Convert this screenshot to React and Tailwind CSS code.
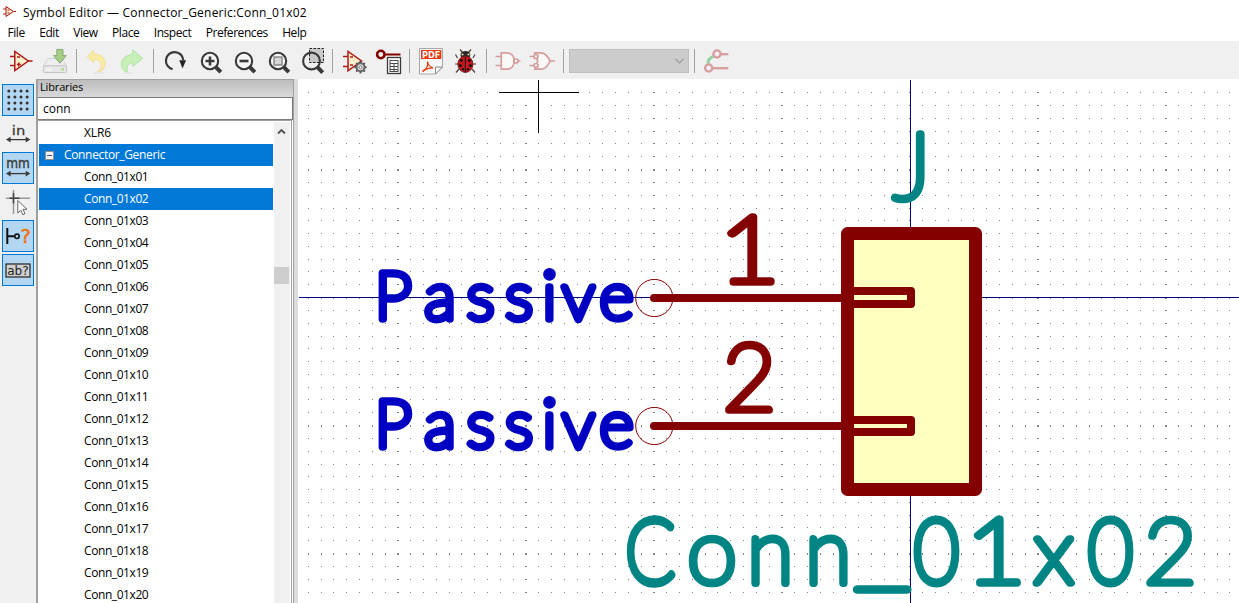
import React from "react";

const OUT = "#b01a1a";
const INK = "#3a3a3a";

/* A 34px toolbar slot; x and y give the slot's origin in window units. */
function Icon({ x, y = 44, children }) {
  return (
    <svg width="34" height="34" viewBox={`${x} ${y} 34 34`} className="block shrink-0" fill="none">
      {children}
    </svg>
  );
}

function Separator() {
  return (
    <div className="flex h-[34px] w-[9px] shrink-0 justify-center py-[5px]">
      <div className="w-px bg-[#a0a0a0]" />
    </div>
  );
}

function Magnifier({ cx, children }) {
  return (
    <g stroke={INK}>
      <circle cx={cx} cy="61" r="8.2" strokeWidth="2.1" fill="#f6f6f6" />
      <path d={`M${cx + 5.6} 66.8 l5.2 5.4`} strokeWidth="4" />
      {children}
    </g>
  );
}

const spokes = [0, 45, 90, 135, 180, 225, 270, 315];

function Toolbar() {
  return (
    <div className="flex h-[38px] shrink-0 items-start bg-[#f0f0f0] pl-1 pt-[3px]">
      <Icon x={4}>
        <g stroke={OUT} strokeWidth="1.5">
          <path d="M14.8 51.4V70.6L28.3 61Z" fill="#fbefcb" />
          <path d="M10 56.5h5M10 65.5h5M28 61h4.6M17 57h3M16.8 64.5h4M18.8 62.5v4" />
        </g>
      </Icon>
      <Icon x={38}>
        <path d="M47.5 58.5h15l4 7.5h-23z" fill="#eeeeee" stroke="#d4d4d4" />
        <rect x="43.4" y="65.8" width="23.2" height="6.8" rx="1.2" fill="#e6e6e6" stroke="#c4c4c4" />
        <path d="M46 69.5h6" stroke="#f8f8f8" strokeWidth="2" />
        <rect x="61.5" y="68" width="2.5" height="2.5" fill="#a9dd86" />
        <path d="M56.8 49.4h6.2v6.2h3.3L59.9 63.2 53.5 55.6h3.3z" fill="#a6cf86" stroke="#8ba57c" />
      </Icon>
      <Separator />
      <Icon x={81}>
        <path d="M87.3 56.5L93.8 50.2V54C101 54 105.2 58 105.2 63.5C105.2 69 101.5 71.5 96.6 72.5C101 69.5 101.7 67 101 64.2C100 60.6 97.6 59.6 93.8 59.5V62.8Z" fill="#faeba2" stroke="#f0dd98" />
        <path d="M94 73h10" stroke="#e6e6e6" strokeWidth="1.5" />
      </Icon>
      <Icon x={115}>
        <path d="M142.7 58.4L132.8 50V54.6C125.5 55 121.5 59 121.5 64.5C121.5 68.5 123.5 71 127.5 72.5C125.8 67.5 127.5 63.2 132.8 62.4V66.2Z" fill="#c6f0b8" stroke="#aee3a2" />
        <path d="M124 73h9" stroke="#e6e6e6" strokeWidth="1.5" />
      </Icon>
      <Separator />
      <Icon x={158}>
        <path d="M172.6 69.2A8.7 8.7 0 1 1 183.3 60" stroke={INK} strokeWidth="2.2" />
        <path d="M179.3 60.2h6.8l-3.6 8.4z" fill="#222" />
      </Icon>
      <Icon x={192}>
        <Magnifier cx={210}>
          <path d="M205.5 61h9M210 56.5v9" strokeWidth="2.6" />
        </Magnifier>
      </Icon>
      <Icon x={226}>
        <Magnifier cx={244}>
          <path d="M239.5 61h9" strokeWidth="2.6" />
        </Magnifier>
      </Icon>
      <Icon x={260}>
        <Magnifier cx={278}>
          <rect x="274" y="57" width="8" height="8" fill="#d6d6d6" stroke="#858585" strokeWidth="1.4" />
        </Magnifier>
      </Icon>
      <Icon x={294}>
        <rect x="309.5" y="48.5" width="14" height="14" fill="#c9c9c9" />
        <g stroke={INK}>
          <circle cx="311.5" cy="61" r="8.4" strokeWidth="2.1" />
          <path d="M317.3 67l5.4 5.6" strokeWidth="4" />
        </g>
        <rect x="309.5" y="48.5" width="14" height="14" stroke="#222" strokeDasharray="2.6 1.4" />
      </Icon>
      <Separator />
      <Icon x={337}>
        <g stroke={OUT} strokeWidth="1.5">
          <path d="M348 51.4V70.8L361.6 61Z" fill="#fbefcb" />
          <path d="M343 56.5h5M343 66.5h5M350 57h3M350 65h3" />
        </g>
        <circle cx="360.5" cy="67.3" r="4" fill="#f0f0f0" stroke="#666" strokeWidth="2" />
        {spokes.map((a) => (
          <path key={a} d="M360.5 62.8v-1.6" stroke="#555" strokeWidth="2" transform={`rotate(${a} 360.5 67.3)`} />
        ))}
        <circle cx="360.5" cy="67.3" r="1.6" fill="#fff" stroke="#666" />
      </Icon>
      <Icon x={371}>
        <circle cx="380.8" cy="54.5" r="3.7" stroke="#840000" strokeWidth="2.6" />
        <path d="M384.5 54.5H400.5" stroke="#840000" strokeWidth="2" />
        <rect x="387.5" y="57.5" width="13" height="16" fill="#fff" stroke={INK} strokeWidth="1.3" />
        <path d="M390 60.5h8M390 63.5h8M390 66.5h8M390 69.5h8M390 71.5h8M390 60v12M394 63v9M398 60v12" stroke="#4a4a4a" />
      </Icon>
      <Separator />
      <Icon x={414}>
        <path d="M419.5 48.5h23v18.5l-7 7h-16z" fill="#f8f8f8" stroke="#a8a8a8" />
        <path d="M435.5 74v-7h7z" fill="#fff" stroke="#888" />
        <rect x="421" y="50" width="20.3" height="9" fill="#e8380d" />
        <text x="422" y="57.8" textLength="18.4" lengthAdjust="spacingAndGlyphs" fill="#fff" className="font-['DejaVu_Sans'] text-[8.5px] font-bold">PDF</text>
        <path d="M427.5 61.5C428.5 66 426 70 423 71.5C422 70.5 427 68 433 67.8C430.5 67 428 64.5 427.5 61.5" stroke="#e8380d" strokeWidth="1.2" />
      </Icon>
      <Icon x={448}>
        <g stroke="#4d4038" strokeWidth="1.2">
          <path d="M460 49.5l3 3.5M471 49.5l-3 3.5M457.5 58l-2-3.5M458 64h-3M459 69l-3 3.5M473 58l2-3.5M473 64h3M472 69l3 3.5" />
        </g>
        <ellipse cx="465.4" cy="55" rx="5" ry="4" fill="#2a2a2a" />
        <path d="M461.5 54.5h2M467.5 54.5h2" stroke="#eee3a0" strokeWidth="1.6" />
        <ellipse cx="465.4" cy="64.2" rx="7.6" ry="8.2" fill="#c4181c" stroke="#5a1010" strokeWidth=".8" />
        <path d="M465.4 57v15.5" stroke="#300" strokeWidth="1.1" />
        <g fill="#1b1010">
          <circle cx="461.4" cy="60.5" r="1.5" /><circle cx="469.4" cy="60.5" r="1.5" />
          <circle cx="460.4" cy="65.5" r="1.5" /><circle cx="470.4" cy="65.5" r="1.5" />
          <circle cx="463" cy="69.3" r="1.2" /><circle cx="467.9" cy="69.3" r="1.2" />
        </g>
      </Icon>
      <Separator />
      <Icon x={491}>
        <g stroke="#d79c9c" strokeWidth="1.7">
          <path d="M501.3 52.8h5.5c5 0 7.5 4 7.5 8.2s-2.5 8.2-7.5 8.2h-5.5z" fill="#fbf8f8" />
          <path d="M495.5 56.5h5.5M495.5 65.5h5.5M517.5 61h3" />
          <circle cx="516" cy="61" r="2" fill="#fbf8f8" />
        </g>
      </Icon>
      <Icon x={525}>
        <g stroke="#d79c9c" strokeWidth="1.7">
          <path d="M535 52.8h5.5c4.5 0 7.5 3.5 9.5 8.2c-2 4.7-5 8.2-9.5 8.2H535c3-5 3-11.5 0-16.4z" fill="#fbf8f8" />
          <path d="M529.5 56.5h4.5M529.5 65.5h4.5M550 61h5" />
          <circle cx="536" cy="56.5" r="2" fill="#fbf8f8" /><circle cx="536" cy="65.5" r="2" fill="#fbf8f8" />
        </g>
      </Icon>
      <Separator />
      <div className="ml-px mt-[5px] flex h-6 w-[120px] shrink-0 items-center justify-end border border-[#bfbfbf] bg-[#cccccc] pr-1">
        <svg width="9" height="6" viewBox="0 0 9 6" fill="none"><path d="M.5 .8L4.5 4.8L8.5 .8" stroke="#9a9a9a" strokeWidth="1.2" /></svg>
      </div>
      <div className="ml-px flex">
        <Separator />
      </div>
      <Icon x={699}>
        <path d="M713.5 56.5C711 57 708.2 59.5 707.8 63.5" stroke="#92d3a2" strokeWidth="3.2" />
        <g stroke="#d79c9c" strokeWidth="2.3">
          <circle cx="717" cy="54" r="3.6" /><path d="M720.6 54.2H728.3" />
          <circle cx="708.7" cy="68" r="3.6" /><path d="M712.3 68.2H728.3" />
        </g>
      </Icon>
    </div>
  );
}

function SideButton({ active, y, children }) {
  return (
    <div className={active ? "h-8 w-8 overflow-hidden bg-[#b3d7f3] outline outline-1 -outline-offset-1 outline-[#0078d7]" : "h-8 w-8 overflow-hidden"}>
      <svg width="32" height="32" viewBox={`2 ${y} 32 32`} className="block" fill="none">
        {children}
      </svg>
    </div>
  );
}

function Dimension({ y }) {
  return (
    <g>
      <path d={`M9 ${y}H27.5`} stroke={INK} strokeWidth="1.3" />
      <path d={`M6 ${y}l4.6-2.8v5.6zM30.3 ${y}l-4.6-2.8v5.6z`} fill={INK} />
    </g>
  );
}

const dots = [0, 1, 2, 3];

function SideBar() {
  return (
    <div className="flex w-9 shrink-0 flex-col gap-0.5 bg-[#f0f0f0] pl-0.5 pt-[5px]">
      <SideButton active y={84}>
        {dots.map((r) => dots.map((c) => <circle key={`${r}${c}`} cx={8.8 + c * 6.1} cy={91 + r * 6} r="1.5" fill="#333" />))}
      </SideButton>
      <SideButton y={118}>
        <text x="11.8" y="134.6" textLength="13.4" lengthAdjust="spacingAndGlyphs" fill={INK} className="font-['DejaVu_Sans'] text-[13px]" stroke={INK} strokeWidth=".3">in</text>
        <Dimension y={139.6} />
      </SideButton>
      <SideButton active y={152}>
        <text x="6.2" y="168.3" textLength="23.6" lengthAdjust="spacingAndGlyphs" fill={INK} className="font-['DejaVu_Sans'] text-[14px]" stroke={INK} strokeWidth=".4">mm</text>
        <Dimension y={173.6} />
      </SideButton>
      <SideButton y={186}>
        <path d="M6 198.3H30M13.5 190V214" stroke="#999" strokeWidth="1.5" />
        <path d="M9.5 198.3H19.5M13.5 193V203.5" stroke="#444" strokeWidth="1.5" />
        <path d="M17.8 200.5v12.5l3-2.8l2 4.5l2.2-1l-2-4.4h4z" fill="#fff" stroke="#666" />
      </SideButton>
      <SideButton active y={220}>
        <path d="M7.3 228V244M7.3 236.3H14.5" stroke="#111" strokeWidth="2" />
        <circle cx="17" cy="236.3" r="2.2" stroke="#111" strokeWidth="1.6" />
        <text x="20.6" y="243.4" textLength="10.4" lengthAdjust="spacingAndGlyphs" fill="#f0700f" stroke="#f0700f" strokeWidth=".5" className="font-['DejaVu_Sans'] text-[20px]">?</text>
      </SideButton>
      <SideButton active y={254}>
        <rect x="6" y="264" width="24" height="13" fill="#d0d0d0" stroke="#222" strokeWidth="1.2" />
        <text x="7.2" y="275" textLength="21.5" lengthAdjust="spacingAndGlyphs" fill="#222" className="font-['DejaVu_Sans'] text-[12.5px]">ab?</text>
      </SideButton>
    </div>
  );
}

const symbols = Array.from({ length: 20 }, (_, i) => `Conn_01x${String(i + 1).padStart(2, "0")}`);

function Row({ children, selected }) {
  return (
    <div className={selected ? "h-[22px] shrink-0 bg-[#0078d7] pl-[45px] leading-[21px] text-white" : "h-[22px] shrink-0 pl-[45px] leading-[21px] text-black"}>
      {children}
    </div>
  );
}

function Libraries() {
  return (
    <div className="flex w-[258px] shrink-0 flex-col overflow-hidden border-l-2 border-r border-t border-[#a0a0a0] bg-white">
      <div className="h-[17px] shrink-0 bg-linear-to-b from-[#bdbdbd] to-[#d9d9d9] pl-0.5 text-[11px] leading-[14px] tracking-[-0.15px]">Libraries</div>
      <div className="-ml-px h-[23px] shrink-0 border border-[#7a7a7a] bg-white pl-[5px] text-[12px] leading-[21px]">conn</div>
      <div className="mr-px flex min-h-0 grow border-r border-t border-[#a0a0a0] pt-px">
        <div className="flex w-[235px] flex-col pl-px text-[12px] tracking-[-0.42px]">
          <Row><span className="tracking-[-0.15px]">XLR6</span></Row>
          <div className="flex h-[22px] shrink-0 items-center gap-[10px] bg-[#0078d7] pl-1.5 tracking-[-0.34px] text-white">
            <span className="flex h-[9px] w-[9px] items-center justify-center border border-[#919191] bg-[#f4f4f4]">
              <span className="h-px w-[5px] bg-[#3a55a0]" />
            </span>
            <span className="self-start leading-[21px]">Connector_Generic</span>
          </div>
          {symbols.map((s) => (
            <Row key={s} selected={s === "Conn_01x02"}>{s}</Row>
          ))}
        </div>
        <div className="ml-px flex w-4 flex-col bg-[#f0f0f0]">
          <svg width="16" height="17" viewBox="0 0 16 17" fill="none" className="shrink-0"><path d="M4 11.5L7.5 8L11 11.5" stroke="#505050" strokeWidth="1.8" /></svg>
          <div className="mt-[128px] h-[17px] w-[15px] shrink-0 bg-[#cdcdcd]" />
        </div>
      </div>
    </div>
  );
}

const gridX = [0, 13, 26, 39, 52, 64, 77, 90, 103, 116];
const gridY = [0, 13, 26, 39, 51, 64, 77, 90, 102, 115];

/* Horizontal stretch of single glyphs, towards the proportions of the plotter font. */
const STRETCH = { C: 0.8, 0: 0.86, 1: 1.14, n: 0.93, _: 1.35 };

function measure(ch, size) {
  const ctx = document.createElement("canvas").getContext("2d");
  ctx.font = "100 100px Lato";
  const m = ctx.measureText(ch);
  const k = (size / 100) * (STRETCH[ch] ?? 1);
  return {
    offset: ((m.actualBoundingBoxRight - m.actualBoundingBoxLeft) / 2) * k,
    length: m.width * k,
  };
}

/* Round-pen lettering: thin glyphs, each centred on its column, widened by a round stroke. */
function StrokeText({ text, centres, y, size, color, weight = 7.6 }) {
  return (
    <text
      y={y}
      fontSize={size}
      fill={color}
      stroke={color}
      strokeLinejoin="round"
      strokeLinecap="round"
      className="font-[Lato] font-thin"
    >
      {[...text].map((ch, i) => {
        const { offset, length } = measure(ch, size);
        const stretch = STRETCH[ch];
        return (
          <tspan
            key={i}
            x={centres[i] - offset}
            y={ch === "_" ? y - 5 : y}
            strokeWidth={stretch < 1 ? weight / Math.sqrt(stretch) : weight}
            textLength={stretch ? length : undefined}
            lengthAdjust={stretch ? "spacingAndGlyphs" : undefined}
          >
            {ch}
          </tspan>
        );
      })}
    </text>
  );
}

function Canvas() {
  const passive = [395.5, 439, 480.5, 519, 549.5, 578.5, 617];
  const value = [651, 712, 770.5, 828.5, 882, 936.5, 997, 1054, 1110.5, 1170];
  return (
    <svg width="941" height="524" viewBox="298 79 941 524" className="block" fill="none">
      <defs>
        <pattern id="grid" x="397" y="41" width="128" height="128" patternUnits="userSpaceOnUse">
          {gridY.map((gy) => gridX.map((gx) => (
            <rect key={`${gx}-${gy}`} x={gx} y={gy} width={gx ? 1 : 2} height={gy ? 1 : 2} fill="#848484" shapeRendering="crispEdges" />
          )))}
        </pattern>
      </defs>
      <rect x="298" y="79" width="941" height="524" fill="#fff" />
      <rect x="299" y="90" width="940" height="513" fill="url(#grid)" />
      <path d="M910.5 80V603M299 297.5H1239" stroke="#000084" />
      <rect x="847.5" y="233.5" width="128" height="256" fill="#ffffc2" stroke="#840000" strokeWidth="13" strokeLinejoin="round" />
      <g stroke="#840000" strokeWidth="8" strokeLinecap="round" strokeLinejoin="round">
        <path d="M654 298H848M654 426H848M848 291H911V304H848M848 420H911V432H848" />
      </g>
      <g stroke="#840000">
        <circle cx="654.3" cy="298" r="18.6" />
        <circle cx="654.3" cy="426" r="18.6" />
      </g>
      <StrokeText text="Passive" centres={passive} y={319} size={66} color="#0000c2" />
      <StrokeText text="Passive" centres={passive} y={447} size={66} color="#0000c2" />
      <g fill="#0000c2">
        <circle cx="549.5" cy="274.2" r="6.3" />
        <circle cx="549.5" cy="402.2" r="6.3" />
      </g>
      <StrokeText text="1" centres={[750.5]} y={282} size={92} color="#840000" />
      <StrokeText text="2" centres={[749]} y={410} size={92} color="#840000" />
      <StrokeText text="J" centres={[907.5]} y={198.5} size={92} color="#008484" />
      <StrokeText text="Conn_01x02" centres={value} y={583} size={91} color="#008484" />
      <path d="M538.5 80V133M499 92.5H579" stroke="#000" />
    </svg>
  );
}

const menus = ["File", "Edit", "View", "Place", "Inspect", "Preferences", "Help"];

export default function App() {
  return (
    <div className="flex h-[603px] w-[1239px] flex-col overflow-hidden bg-white font-['Open_Sans','Noto_Sans',sans-serif] text-[12px] text-black">
      <div className="flex h-6 shrink-0 items-center gap-[7px] pl-[3px]">
        <svg width="13" height="14" viewBox="0 0 13 14" fill="none" stroke={OUT}>
          <path d="M3 1.5V11.5L10.5 6.5Z" fill="#fbefcb" /><path d="M0 4h3M0 9h3M10.5 6.5H13M4.5 5h2M4.5 8h2" />
        </svg>
        <span className="whitespace-nowrap pt-0.5 tracking-[0.21px]">Symbol Editor — Connector_Generic:Conn_01x02</span>
      </div>
      <div className="flex h-[17px] shrink-0 items-center gap-[14.4px] pl-[7.5px] leading-[17px] tracking-[-0.43px]">
        {menus.map((m) => <span key={m}>{m}</span>)}
      </div>
      <Toolbar />
      <div className="flex min-h-0 grow">
        <SideBar />
        <Libraries />
        <div className="w-1 shrink-0 bg-[#dcdcdc]" />
        <Canvas />
      </div>
    </div>
  );
}
